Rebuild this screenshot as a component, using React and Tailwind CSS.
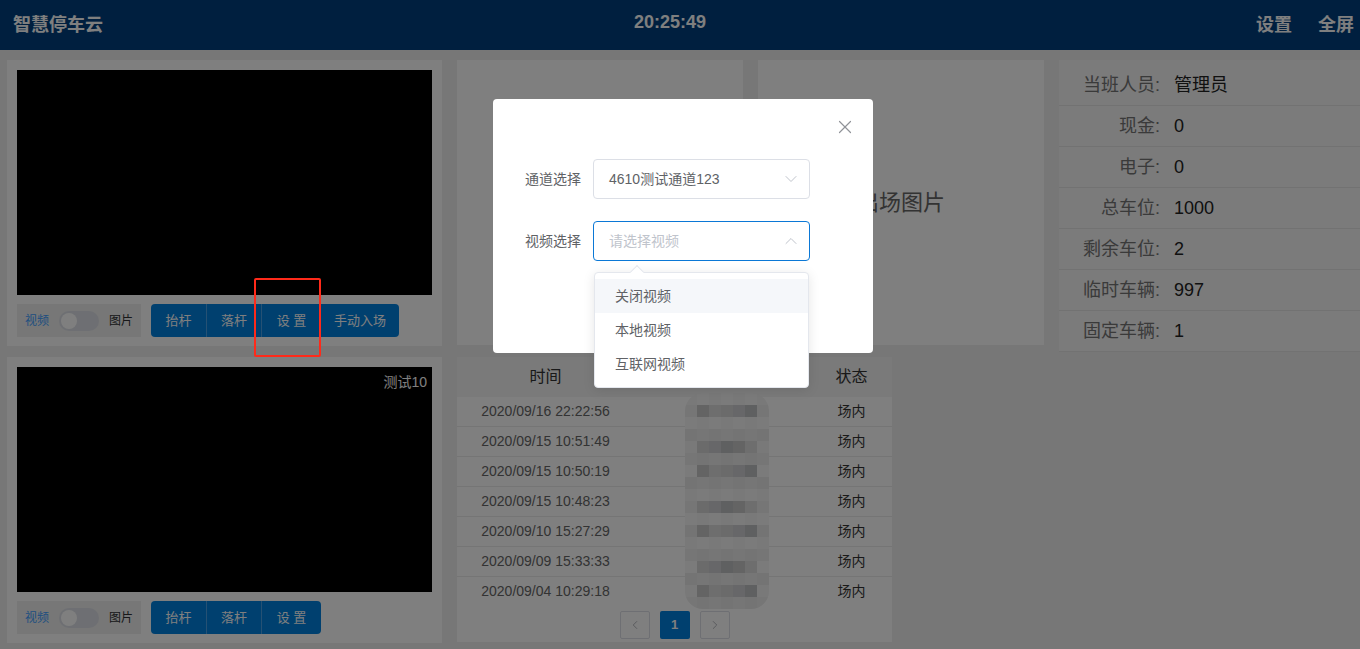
import React from 'react';
import { ChevronDown, ChevronUp, ChevronLeft, ChevronRight, X } from 'lucide-react';

const font = "font-['Liberation_Sans','Noto_Sans_CJK_SC',sans-serif]";

const records = [
  '2020/09/16 22:22:56',
  '2020/09/15 10:51:49',
  '2020/09/15 10:50:19',
  '2020/09/15 10:48:23',
  '2020/09/10 15:27:29',
  '2020/09/09 15:33:33',
  '2020/09/04 10:29:18',
];

const stats = [
  ['当班人员', '管理员'],
  ['现金', '0'],
  ['电子', '0'],
  ['总车位', '1000'],
  ['剩余车位', '2'],
  ['临时车辆', '997'],
  ['固定车辆', '1'],
];

const darkCells = ['bg-[#c9c9c9]', 'bg-[#d6d6d6]', 'bg-[#bfc0c2]', 'bg-[#dcdcdc]', 'bg-[#cfcfd2]'];
const lightCells = ['bg-[#f2f2f2]', 'bg-[#ececec]', 'bg-[#f6f6f6]', 'bg-[#e8e8e8]'];

function CameraPanel({ label, buttons }) {
  return (
    <div className="h-[286px] bg-white p-[10px]">
      <div className="relative h-[225px] bg-black">
        {label && (
          <span className="absolute right-[5px] top-[5px] text-[14px] leading-[20px] text-white">{label}</span>
        )}
      </div>
      <div className="mt-[9px] flex items-center gap-[10px]">
        <div className="flex h-[33px] w-[124px] items-center bg-[#eee] px-[8px] text-[12px]">
          <span className="text-[#409eff]">视频</span>
          <span className="relative mx-[10px] h-[20px] w-[40px] rounded-full bg-[#dcdfe6]">
            <span className="absolute left-[2px] top-[2px] h-[16px] w-[16px] rounded-full bg-white" />
          </span>
          <span className="text-[#303133]">图片</span>
        </div>
        <div className="flex h-[33px] overflow-hidden rounded-[4px] bg-[#0080de] text-[13px] text-white">
          {buttons.map((b, i) => (
            <div
              key={b}
              className={
                i === 0 ? 'flex w-[56px] items-center justify-center border-r border-[#4aa3e8]'
                  : i === 1 ? 'flex w-[55px] items-center justify-center border-r border-[#4aa3e8]'
                  : i === 2 ? 'flex w-[59px] items-center justify-center'
                  : 'flex w-[78px] items-center justify-center'
              }
            >
              {b}
            </div>
          ))}
        </div>
      </div>
    </div>
  );
}

function ImagePanel({ title }) {
  return (
    <div className="flex h-[285px] w-[286px] items-center justify-center bg-white text-[22px] text-[#666]">
      {title}
    </div>
  );
}

function Stats() {
  return (
    <div className="w-[301px] bg-[#f6f6f6] pt-[5px]">
      {stats.map(([k, v]) => (
        <div key={k} className="flex h-[41px] items-center border-b border-[#e4e4e4] text-[18px]">
          <span className="w-[101px] text-right text-[#757575]">{k}:</span>
          <span className="ml-[14px] text-[#222]">{v}</span>
        </div>
      ))}
    </div>
  );
}

function Mosaic() {
  const cells = [];
  for (let r = 0; r < 18; r++) {
    for (let c = 0; c < 7; c++) {
      const y = 393 + 12 * r + 6;
      const band = [0, 1, 2, 3, 4, 5, 6].some((k) => Math.abs(y - (412 + 30 * k)) < 7);
      const cls = band && c > 0 && c < 6
        ? darkCells[(r * 7 + c * 3) % darkCells.length]
        : lightCells[(r * 5 + c * 2) % lightCells.length];
      cells.push(<div key={`${r}-${c}`} className={cls} />);
    }
  }
  return (
    <div className="absolute left-[228px] top-[36px] grid w-[84px] grid-cols-7 grid-rows-[repeat(18,12px)] overflow-hidden rounded-[18px] blur-[0.5px]">
      {cells}
    </div>
  );
}

function RecordTable() {
  return (
    <div className="relative h-[285px] w-[435px] bg-white">
      <div className="flex h-[40px] items-center bg-[#f4f4f4] text-[16px] text-[#333]">
        <div className="w-[177px] text-center">时间</div>
        <div className="w-[177px] text-center">车牌号</div>
        <div className="w-[81px] text-center">状态</div>
      </div>
      <div className="h-[206px] overflow-hidden">
        {records.map((t) => (
          <div key={t} className="flex h-[30px] items-center border-b border-[#ebebeb] text-[14px]">
            <div className="w-[177px] text-center text-[#666]">{t}</div>
            <div className="w-[177px]" />
            <div className="w-[81px] text-center text-[#333]">场内</div>
          </div>
        ))}
      </div>
      <div className="flex justify-center gap-[10px] pt-[8px]">
        <div className="flex h-[28px] w-[30px] items-center justify-center rounded-[2px] border border-[#dcdfe6] text-[#a8abb2]">
          <ChevronLeft size={14} strokeWidth={1.5} />
        </div>
        <div className="flex h-[28px] w-[30px] items-center justify-center rounded-[2px] bg-[#0080de] text-[13px] font-bold text-white">
          1
        </div>
        <div className="flex h-[28px] w-[30px] items-center justify-center rounded-[2px] border border-[#dcdfe6] text-[#a8abb2]">
          <ChevronRight size={14} strokeWidth={1.5} />
        </div>
      </div>
      <Mosaic />
    </div>
  );
}

function Field({ label, value, placeholder, focused }) {
  return (
    <div className="flex items-center">
      <span className="w-[68px] text-[#606266]">{label}</span>
      <div
        className={
          focused
            ? 'flex h-[40px] w-[217px] items-center justify-between rounded-[4px] border border-[#0b78d6] pl-[15px] pr-[8px]'
            : 'flex h-[40px] w-[217px] items-center justify-between rounded-[4px] border border-[#dcdfe6] pl-[15px] pr-[8px]'
        }
      >
        {value ? <span className="text-[#606266]">{value}</span> : <span className="text-[#c0c4cc]">{placeholder}</span>}
        {focused ? (
          <ChevronUp size={20} strokeWidth={1.2} className="text-[#c0c4cc]" />
        ) : (
          <ChevronDown size={20} strokeWidth={1.2} className="text-[#c0c4cc]" />
        )}
      </div>
    </div>
  );
}

function Dialog() {
  return (
    <div className="absolute left-[493px] top-[99px] h-[254px] w-[380px] rounded-[4px] bg-white">
      <X size={22} strokeWidth={1.3} className="absolute left-[341px] top-[17px] text-[#909399]" />
      <div className="flex flex-col gap-[22px] pl-[32px] pt-[60px] text-[14px]">
        <Field label="通道选择" value="4610测试通道123" />
        <Field label="视频选择" placeholder="请选择视频" focused />
      </div>
    </div>
  );
}

function Dropdown() {
  const items = ['关闭视频', '本地视频', '互联网视频'];
  return (
    <div className="absolute left-[594px] top-[272px] w-[215px] rounded-[4px] border border-[#e4e7ed] bg-white py-[6px] shadow-[0_2px_12px_rgba(0,0,0,0.1)]">
      <div className="absolute -top-[6px] left-[37px] h-[10px] w-[10px] rotate-45 border-l border-t border-[#e4e7ed] bg-white" />
      {items.map((it, i) => (
        <div
          key={it}
          className={
            i === 0
              ? 'relative h-[34px] bg-[#f5f7fa] px-[20px] text-[14px] leading-[34px] text-[#606266]'
              : 'relative h-[34px] px-[20px] text-[14px] leading-[34px] text-[#606266]'
          }
        >
          {it}
        </div>
      ))}
    </div>
  );
}

export default function App() {
  return (
    <div className={`relative h-[649px] w-[1360px] overflow-hidden bg-[#eee] ${font}`}>
      <header className="flex h-[50px] bg-[#003e7e] font-bold text-white">
        <div className="flex w-[634px] items-center pl-[13px] text-[18px]">智慧停车云</div>
        <div className="pt-[12px] text-[18px] leading-[20px]">20:25:49</div>
        <div className="flex flex-1 items-center justify-end gap-[26px] pr-[6px] text-[18px]">
          <span>设置</span>
          <span>全屏</span>
        </div>
      </header>
      <main className="flex gap-[15px] pl-[7px] pt-[10px]">
        <div className="flex w-[435px] flex-col gap-[11px]">
          <CameraPanel buttons={['抬杆', '落杆', '设 置', '手动入场']} />
          <CameraPanel label="测试10" buttons={['抬杆', '落杆', '设 置']} />
        </div>
        <div className="flex flex-col gap-[5px]">
          <div className="flex items-start gap-[15px]">
            <ImagePanel title="入场图片" />
            <ImagePanel title="出场图片" />
            <Stats />
          </div>
          <RecordTable />
        </div>
      </main>
      <div className="absolute inset-0 bg-black/50" />
      <Dialog />
      <Dropdown />
      <div className="absolute left-[254px] top-[278px] h-[79px] w-[67px] rounded-[2px] border-2 border-[#ff2a1a]" />
    </div>
  );
}
